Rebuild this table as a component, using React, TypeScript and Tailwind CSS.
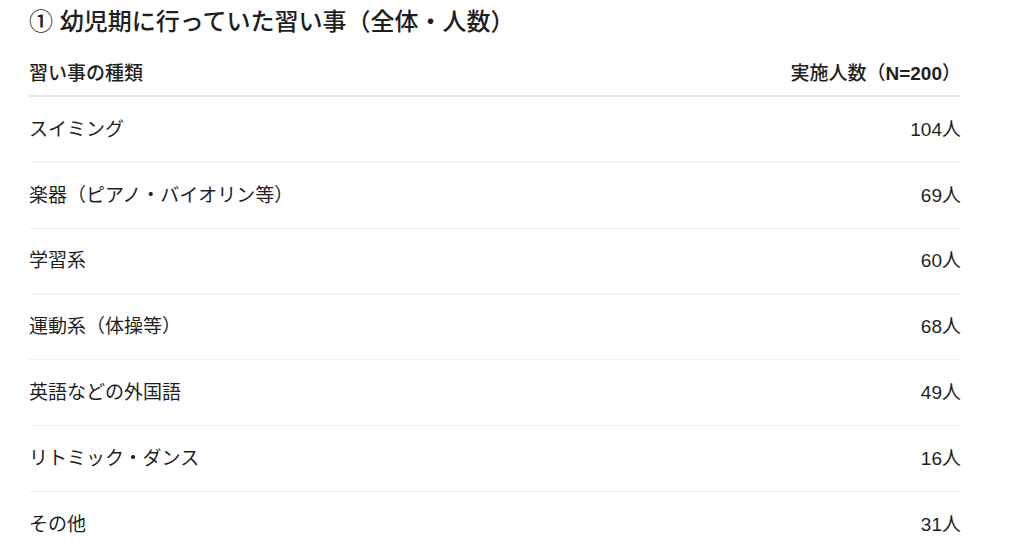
import React from "react";

const rows: [string, string][] = [
  ["スイミング", "104人"],
  ["楽器（ピアノ・バイオリン等）", "69人"],
  ["学習系", "60人"],
  ["運動系（体操等）", "68人"],
  ["英語などの外国語", "49人"],
  ["リトミック・ダンス", "16人"],
  ["その他", "31人"],
];

export default function App() {
  return (
    <div
      className="w-[1024px] h-[557px] bg-white overflow-hidden text-[#1f1f1f]"
      style={{ fontFamily: '"Liberation Sans", "Noto Sans CJK JP", sans-serif' }}
    >
      <div className="ml-[29px] w-[932px]">
        <div className="h-[44px] flex items-center text-[24px] font-medium leading-none">
          ① 幼児期に行っていた習い事（全体・人数）
        </div>
        <div className="h-[53px] pt-[7px] flex items-center justify-between border-b-2 border-[#e6e6e6] text-[19px] font-medium leading-none">
          <span>習い事の種類</span>
          <span>
            実施人数（<span className="font-bold">N=200</span>）
          </span>
        </div>
        {rows.map(([label, value], i) => (
          <div
            key={label}
            className={
              i < rows.length - 1
                ? "h-[65.8px] flex items-center justify-between border-b border-[#f0f0f0] text-[19px] leading-none"
                : "h-[65.8px] flex items-center justify-between text-[19px] leading-none"
            }
          >
            <span>{label}</span>
            <span>{value}</span>
          </div>
        ))}
      </div>
    </div>
  );
}
